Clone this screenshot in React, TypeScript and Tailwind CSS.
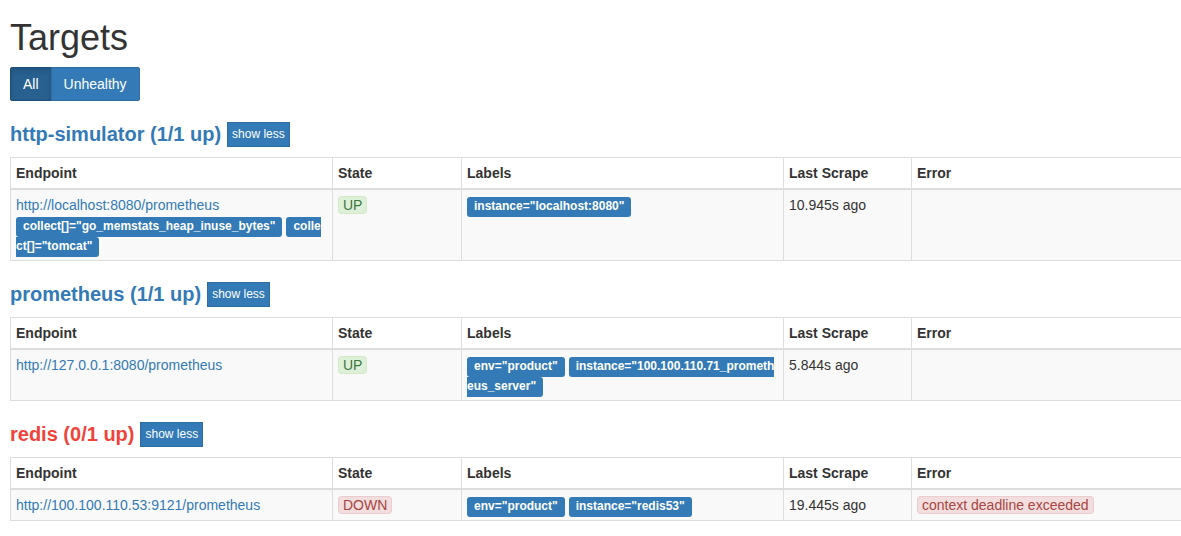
import React from "react";

const Label = ({ children }: { children: React.ReactNode }) => (
  <span className="bg-[#337ab7] text-white font-bold text-[12px] leading-none px-[7px] pt-[2px] pb-[4px] rounded-[3px] [box-decoration-break:slice]">
    {children}
  </span>
);

const State = ({ ok, children }: { ok: boolean; children: React.ReactNode }) => (
  <span
    className={
      ok
        ? "bg-[#dff0d8] text-[#3c763d] border border-[#d6e9c6] rounded-[4px] px-[4px]"
        : "bg-[#f2dede] text-[#a94442] border border-[#ebccd1] rounded-[4px] px-[4px]"
    }
  >
    {children}
  </span>
);

type Row = {
  endpoint: string;
  params?: string[];
  up: boolean;
  labels: string[];
  scrape: string;
  error?: string;
};

const headers = ["Endpoint", "State", "Labels", "Last Scrape", "Error"];

const Table = ({ rows }: { rows: Row[] }) => (
  <div className="mt-[10px] grid grid-cols-[322px_129px_322px_128px_420px] w-[1321px] border-t border-l border-[#ddd]">
    {headers.map((h) => (
      <div key={h} className="p-[5px] border-r border-b-2 border-[#ddd] font-bold bg-white">
        {h}
      </div>
    ))}
    {rows.map((r, i) => (
      <React.Fragment key={i}>
        <div className="p-[5px] border-r border-b border-[#ddd] bg-[#f9f9f9] break-all">
          <a className="text-[#337ab7]" href="#">
            {r.endpoint}
          </a>
          {r.params && (
            <>
              <br />
              {r.params.map((p, j) => (
                <React.Fragment key={j}>
                  {j > 0 && " "}
                  <Label>{p}</Label>
                </React.Fragment>
              ))}
            </>
          )}
        </div>
        <div className="p-[5px] border-r border-b border-[#ddd] bg-[#f9f9f9]">
          <State ok={r.up}>{r.up ? "UP" : "DOWN"}</State>
        </div>
        <div className="p-[5px] border-r border-b border-[#ddd] bg-[#f9f9f9] break-all">
          {r.labels.map((l, j) => (
            <React.Fragment key={j}>
              {j > 0 && " "}
              <Label>{l}</Label>
            </React.Fragment>
          ))}
        </div>
        <div className="p-[5px] border-r border-b border-[#ddd] bg-[#f9f9f9]">{r.scrape}</div>
        <div className="p-[5px] border-r border-b border-[#ddd] bg-[#f9f9f9]">
          {r.error && <State ok={false}>{r.error}</State>}
        </div>
      </React.Fragment>
    ))}
  </div>
);

const Section = ({
  title,
  healthy,
  rows,
}: {
  title: string;
  healthy: boolean;
  rows: Row[];
}) => (
  <>
    <div className="mt-[20px] h-[26px] flex items-center gap-[6px]">
      <h2
        className={
          healthy
            ? "text-[20px] leading-[26px] font-bold text-[#337ab7]"
            : "text-[20px] leading-[26px] font-bold text-[#f0433a]"
        }
      >
        {title}
      </h2>
      <button className="h-[25px] px-[4px] bg-[#337ab7] border border-[#2e6da4] text-white text-[12px] leading-[18px]">
        show less
      </button>
    </div>
    <Table rows={rows} />
  </>
);

export default function App() {
  return (
    <div className="w-full overflow-hidden bg-white px-[10px] pb-[20px] font-['Liberation_Sans',Arial,sans-serif] text-[14px] leading-[20px] text-[#333]">
      <h1 className="mt-[18px] mb-[9px] text-[36px] leading-[40px] font-normal">Targets</h1>
      <div className="flex">
        <button className="h-[34px] px-[12px] bg-[#286090] border border-[#204d74] text-white rounded-l-[2px] shadow-[inset_0_3px_5px_rgba(0,0,0,0.125)]">
          All
        </button>
        <button className="h-[34px] px-[12px] bg-[#337ab7] border border-[#2e6da4] -ml-px text-white rounded-r-[2px]">
          Unhealthy
        </button>
      </div>
      <Section
        title="http-simulator (1/1 up)"
        healthy
        rows={[
          {
            endpoint: "http://localhost:8080/prometheus",
            params: ['collect[]="go_memstats_heap_inuse_bytes"', 'collect[]="tomcat"'],
            up: true,
            labels: ['instance="localhost:8080"'],
            scrape: "10.945s ago",
          },
        ]}
      />
      <Section
        title="prometheus (1/1 up)"
        healthy
        rows={[
          {
            endpoint: "http://127.0.0.1:8080/prometheus",
            up: true,
            labels: ['env="product"', 'instance="100.100.110.71_prometheus_server"'],
            scrape: "5.844s ago",
          },
        ]}
      />
      <Section
        title="redis (0/1 up)"
        healthy={false}
        rows={[
          {
            endpoint: "http://100.100.110.53:9121/prometheus",
            up: false,
            labels: ['env="product"', 'instance="redis53"'],
            scrape: "19.445s ago",
            error: "context deadline exceeded",
          },
        ]}
      />
    </div>
  );
}
